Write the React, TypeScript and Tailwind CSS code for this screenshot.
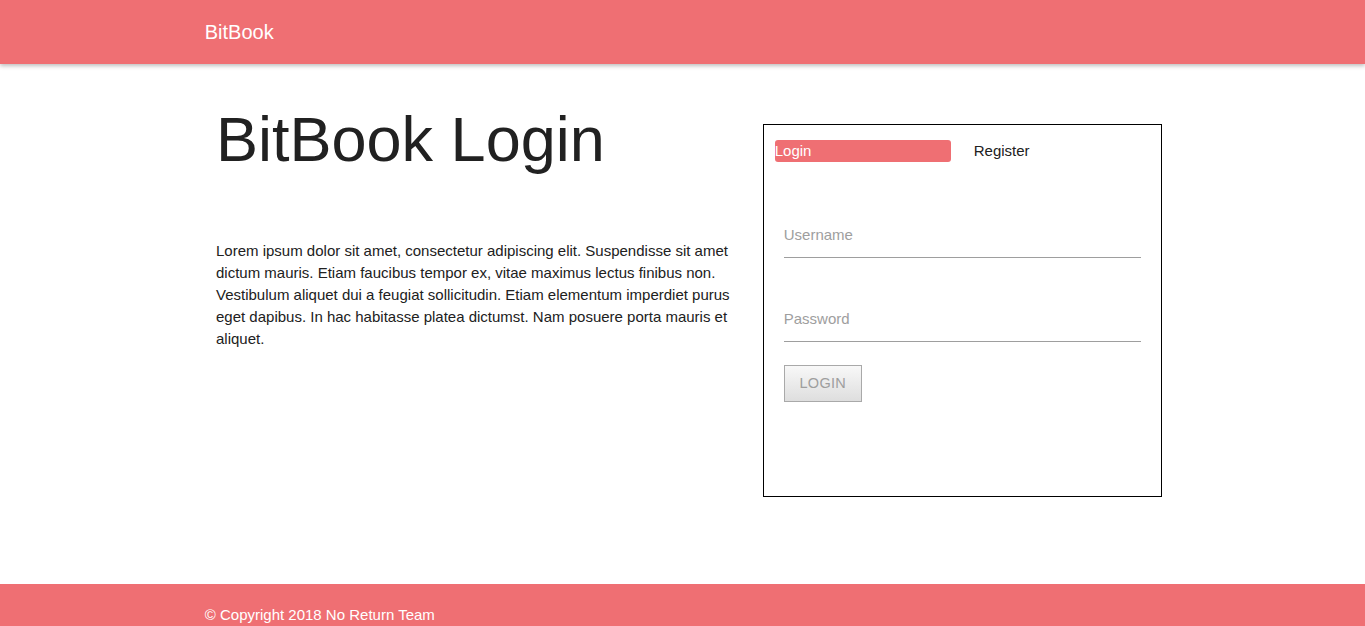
import React from "react";

export default function App() {
  return (
    <div className="min-h-screen bg-white text-[#212121]" style={{ fontFamily: "Arial, 'Liberation Sans', sans-serif" }}>
      <header className="h-16 bg-[#ef6f73] shadow-[0_2px_4px_rgba(0,0,0,0.25)] relative z-10">
        <div className="w-[955.5px] mx-auto h-16 flex items-center">
          <span className="text-white text-[20px] leading-none">BitBook</span>
        </div>
      </header>
      <main className="h-[520px]">
        <div className="w-[955.5px] mx-auto flex">
          <div className="w-[558px] shrink-0 px-[11.25px] pt-[41px]">
            <h1 className="text-[63px] leading-[69px] font-normal text-[#212121]">BitBook Login</h1>
            <p className="mt-[66px] text-[15px] leading-[22px] text-[#212121]">
              Lorem ipsum dolor sit amet, consectetur adipiscing elit. Suspendisse sit amet dictum mauris. Etiam faucibus tempor ex, vitae maximus lectus finibus non. Vestibulum aliquet dui a feugiat sollicitudin. Etiam elementum imperdiet purus eget dapibus. In hac habitasse platea dictumst. Nam posuere porta mauris et aliquet.
            </p>
          </div>
          <div className="w-[399px] h-[373px] shrink-0 mt-[60px] border border-black px-[11px] pt-[15px]">
            <div className="flex items-center h-[22px]">
              <div className="w-[176px] h-[22px] bg-[#ef6f73] rounded-[3px] text-white text-[15px] leading-[22px]">Login</div>
              <div className="ml-[23px] text-[15px] leading-[22px] text-[#212121]">Register</div>
            </div>
            <div className="px-[9px] mt-[62px]">
              <div className="border-b border-[#9e9e9e] h-[34px] text-[15px] text-[#9e9e9e] leading-[22px]">Username</div>
              <div className="mt-[50px] border-b border-[#9e9e9e] h-[34px] text-[15px] text-[#9e9e9e] leading-[22px]">Password</div>
              <button className="mt-[23px] w-[78px] h-[37px] border border-[#a9a9a9] bg-gradient-to-b from-[#f8f8f8] to-[#dedede] text-[#9e9e9e] text-[14.5px] uppercase tracking-[0.3px]">Login</button>
            </div>
          </div>
        </div>
      </main>
      <footer className="bg-[#ef6f73] h-[120px]">
        <div className="w-[955.5px] mx-auto pt-[22px] text-white text-[15px] leading-[18px]">© Copyright 2018 No Return Team</div>
      </footer>
    </div>
  );
}
